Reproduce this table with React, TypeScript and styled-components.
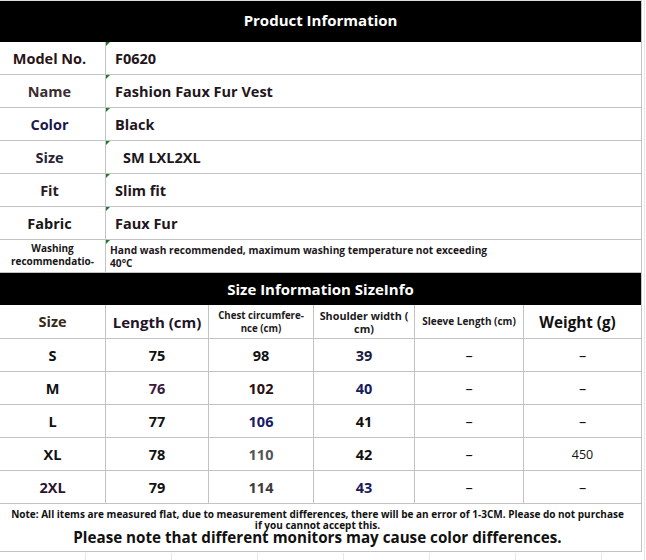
import React from 'react';
import styled, { createGlobalStyle, css } from 'styled-components';

const GlobalStyle = createGlobalStyle`
  html, body {
    margin: 0;
    padding: 0;
    background: #fff;
  }
  body {
    font-family: 'Open Sans', 'Noto Sans', 'Liberation Sans', sans-serif;
    font-weight: 700;
  }
`;

const LINE = '#c3c3c3';

// the spreadsheet grid shows faintly around the table
export const Sheet = styled.div`
  width: 646px;
  height: 560px;
  overflow: hidden;
  background:
    linear-gradient(#e6e6e6, #e6e6e6) 644px 0 / 1px 100% no-repeat,
    repeating-linear-gradient(90deg, transparent 0 85px, #e6e6e6 85px 86px) 0 553px / 100% 7px no-repeat;
`;

export const Table = styled.div`
  width: 642px;
  display: flex;
  flex-direction: column;
`;

export const Banner = styled.div<{ tall?: boolean }>`
  height: ${(p) => (p.tall ? 42 : 32)}px;
  background: #000;
  color: #fff;
  display: flex;
  align-items: center;
  justify-content: center;
  font-size: 15px;
  border-right: 1px solid ${LINE};
  box-sizing: border-box;
  ${(p) => p.tall && css`border-top: 1px solid #ddd; padding-bottom: 4px;`}
`;

export const InfoRow = styled.div`
  display: grid;
  grid-template-columns: 106px 1fr;
  height: 33px;
  border-bottom: 1px solid ${LINE};
  box-sizing: border-box;
`;

export const Label = styled.div<{ tone?: string; small?: boolean }>`
  border-right: 1px solid ${LINE};
  display: flex;
  align-items: center;
  justify-content: center;
  text-align: center;
  overflow: hidden;
  padding-right: 6px;
  color: ${(p) => p.tone || '#1e1518'};
  font-size: 14.5px;

  ${(p) =>
    p.small &&
    css`
      align-items: flex-start;
      padding-right: 0;
      font-size: 10px;
      line-height: 13px;
      padding-top: 2px;
    `}
`;

export const Value = styled.div<{ indent?: number; small?: boolean }>`
  position: relative;
  border-right: 1px solid ${LINE};
  display: flex;
  align-items: center;
  padding-left: ${(p) => p.indent ?? 9}px;
  color: #22161c;
  font-size: 14.5px;

  ${(p) =>
    p.small &&
    css`
      align-items: flex-start;
      padding-left: 4px;
      padding-top: 4px;
      font-size: 10.2px;
      line-height: 12.5px;
    `}

  &::before {
    content: '';
    position: absolute;
    left: 0;
    top: 0;
    border-top: 4px solid #1c7d2a;
    border-right: 4px solid transparent;
  }
`;

export const SizeGrid = styled.div`
  display: grid;
  grid-template-columns: 106px 103px 105px 101px 109px 118px;
`;

export const Cell = styled.div<{ tone?: string; size?: number; head?: boolean; plain?: boolean; shift?: number }>`
  height: ${(p) => (p.head ? 34 : 33)}px;
  box-sizing: border-box;
  border-right: 1px solid ${LINE};
  border-bottom: 1px solid ${LINE};
  display: flex;
  align-items: center;
  justify-content: center;
  text-align: center;
  padding-right: ${(p) => p.shift ?? 0}px;
  color: ${(p) => p.tone || '#111'};
  font-size: ${(p) => p.size ?? 14.5}px;
  line-height: ${(p) => (p.size && p.size < 12 ? '13px' : 'normal')};
  font-weight: ${(p) => (p.plain ? 400 : 700)};
`;

export const Footer = styled.div`
  height: 48px;
  box-sizing: border-box;
  border-bottom: 1px solid ${LINE};
  border-right: 1px solid ${LINE};
  display: flex;
  flex-direction: column;
  align-items: center;
  padding-top: 5px;
  padding-right: 6px;
  text-align: center;
  color: #111;
`;

export const FooterNote = styled.div`
  font-size: 10px;
  line-height: 10.5px;
  white-space: nowrap;
`;

export const FooterWarn = styled.div`
  font-size: 15.2px;
  line-height: 17px;
  margin-top: -1px;
`;

const info: { label: React.ReactNode; value: React.ReactNode; tone?: string; indent?: number; small?: boolean }[] = [
  { label: 'Model No.', value: 'F0620', tone: '#2a1416' },
  { label: 'Name', value: 'Fashion Faux Fur Vest', tone: '#3a2c30' },
  { label: 'Color', value: 'Black', tone: '#1a1850' },
  { label: 'Size', value: 'SM LXL2XL', tone: '#2a2436', indent: 17 },
  { label: 'Fit', value: 'Slim fit', tone: '#2c1a26' },
  { label: 'Fabric', value: 'Faux Fur', tone: '#161616' },
  {
    label: (
      <>
        Washing
        <br />
        recommendatio-
        <br />
        ns
      </>
    ),
    value: (
      <>
        Hand wash recommended, maximum washing temperature not exceeding
        <br />
        40°C
      </>
    ),
    tone: '#161616',
    small: true,
  },
];

type C = { t: React.ReactNode; tone?: string; plain?: boolean; size?: number; shift?: number };

const D: C = { t: '–', plain: true };

const sizes: C[][] = [
  [{ t: 'S' }, { t: '75' }, { t: '98' }, { t: '39', tone: '#1a1a40' }, D, D],
  [{ t: 'M' }, { t: '76', tone: '#3a1a40' }, { t: '102', tone: '#2a1010' }, { t: '40', tone: '#1a1a60' }, D, D],
  [{ t: 'L' }, { t: '77' }, { t: '106', tone: '#1a1a66' }, { t: '41' }, D, D],
  [{ t: 'XL' }, { t: '78' }, { t: '110', tone: '#555' }, { t: '42' }, D, { t: '450', plain: true, size: 12.5 }],
  [{ t: '2XL', tone: '#2a1430' }, { t: '79' }, { t: '114', tone: '#3c3c3c' }, { t: '43', tone: '#1a1a5a' }, D, D],
];

const head: C[] = [
  { t: 'Size', tone: '#3a2a18' },
  { t: 'Length (cm)', tone: '#22142a', size: 15 },
  {
    t: (
      <>
        Chest circumfere-
        <br />
        nce (cm)
      </>
    ),
    size: 9.7,
    tone: '#1e1a1a',
  },
  {
    t: (
      <>
        Shoulder width (
        <br />
        cm)
      </>
    ),
    size: 10.8,
    tone: '#1a1a1a',
  },
  { t: 'Sleeve Length (cm)', size: 10, tone: '#1a1a1a' },
  { t: 'Weight (g)', size: 15.2, tone: '#111', shift: 10 },
];

export default function App() {
  return (
    <Sheet>
      <GlobalStyle />
      <Table>
        <Banner tall>Product Information</Banner>
        {info.map((r, i) => (
          <InfoRow key={i}>
            <Label tone={r.tone} small={r.small}>
              <span>{r.label}</span>
            </Label>
            <Value indent={r.indent} small={r.small}>
              <span>{r.value}</span>
            </Value>
          </InfoRow>
        ))}
        <Banner>Size Information SizeInfo</Banner>
        <SizeGrid>
          {head.map((c, i) => (
            <Cell key={'h' + i} head tone={c.tone} size={c.size} shift={c.shift}>
              <span>{c.t}</span>
            </Cell>
          ))}
          {sizes.map((row, r) =>
            row.map((c, i) => (
              <Cell key={r + '-' + i} tone={c.tone} plain={c.plain} size={c.size}>
                {c.t}
              </Cell>
            ))
          )}
        </SizeGrid>
        <Footer>
          <FooterNote>
            Note: All items are measured flat, due to measurement differences, there will be an error of 1-3CM. Please do not purchase
            <br />
            if you cannot accept this.
          </FooterNote>
          <FooterWarn>Please note that different monitors may cause color differences.</FooterWarn>
        </Footer>
      </Table>
    </Sheet>
  );
}
